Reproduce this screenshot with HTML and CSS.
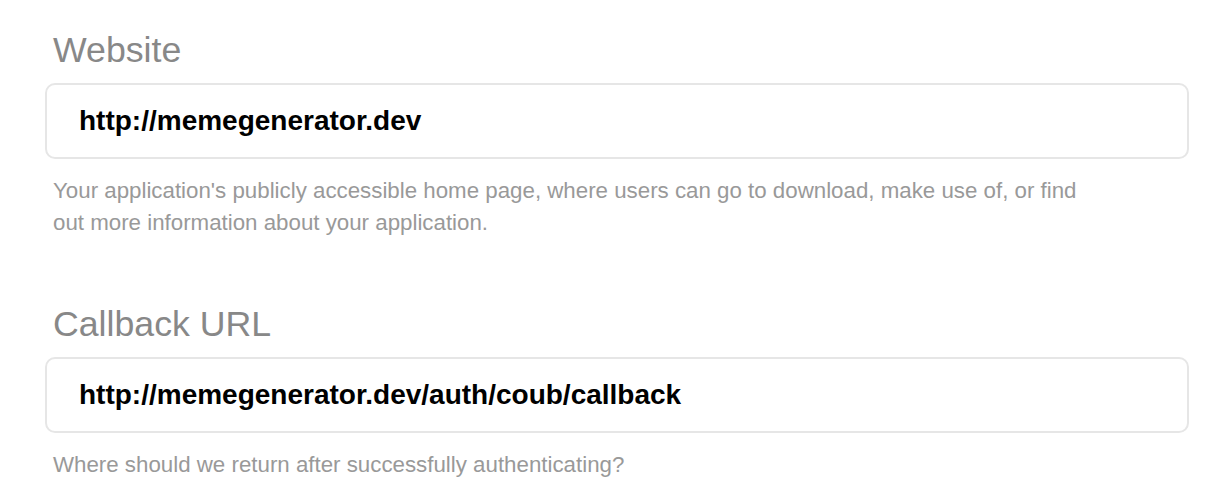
FILE: index.html
```html
<!DOCTYPE html>
<html lang="en">
<head>
<meta charset="utf-8">
<title>Application settings</title>
<link rel="stylesheet" href="styles.css">
</head>
<body>
<form class="form">
  <div class="field">
    <label class="label">Website</label>
    <div class="input">http://memegenerator.dev</div>
    <p class="help">Your application's publicly accessible home page, where users can go to download, make use of, or find out more information about your application.</p>
  </div>
  <div class="field">
    <label class="label">Callback URL</label>
    <div class="input">http://memegenerator.dev/auth/coub/callback</div>
    <p class="help">Where should we return after successfully authenticating?</p>
  </div>
</form>
</body>
</html>
```

FILE: styles.css
```css
html, body {
  margin: 0;
  padding: 0;
  background: #ffffff;
}

body {
  font-family: "Liberation Sans", Arial, Helvetica, sans-serif;
}

.form {
  width: 1144px;
  padding: 30px 0 0 45px;
  display: flex;
  flex-direction: column;
  gap: 65px;
}

.field {
  display: flex;
  flex-direction: column;
}

.label {
  display: block;
  margin-left: 8px;
  font-size: 35.7px;
  line-height: 40px;
  color: #888888;
}

.input {
  margin-top: 13px;
  height: 72px;
  border: 2px solid #e6e6e6;
  border-radius: 10px;
  padding-left: 32px;
  display: flex;
  align-items: center;
  font-size: 28px;
  font-weight: bold;
  color: #000000;
  background: #ffffff;
}

.help {
  margin: 16px 0 0 8px;
  max-width: 1060px;
  font-size: 22.3px;
  line-height: 32px;
  color: #999999;
}
```
